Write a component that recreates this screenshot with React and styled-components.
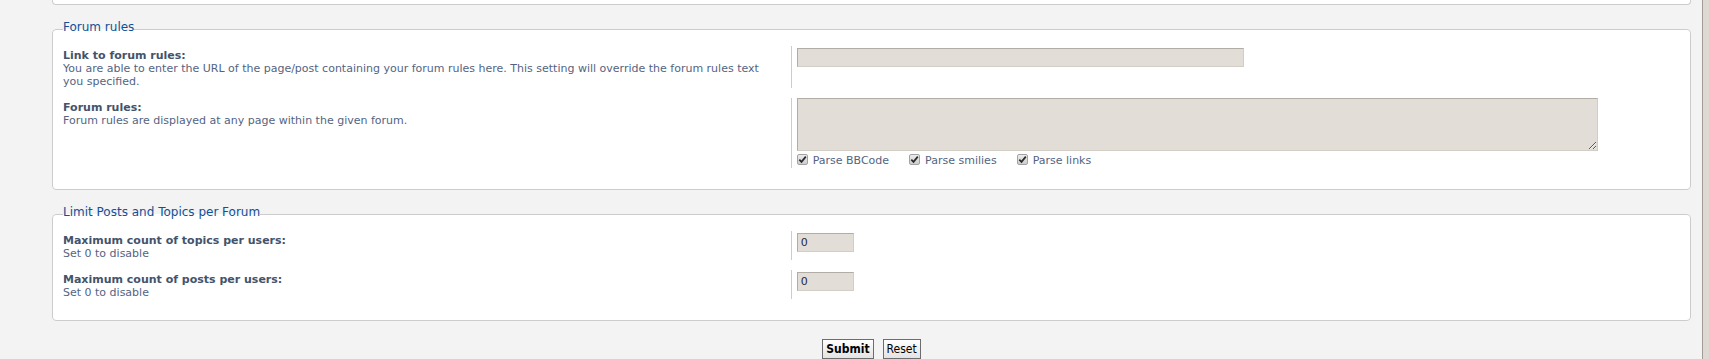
import React from 'react';
import styled, { createGlobalStyle, css } from 'styled-components';

const GlobalStyle = createGlobalStyle`
  html, body {
    margin: 0;
    padding: 0;
    background: #f3f3f3;
  }
  body {
    font-family: "DejaVu Sans", Verdana, sans-serif;
    font-size: 11px;
    color: #536482;
  }
`;

const Page = styled.div`
  display: flex;
  height: 100vh;
  overflow: hidden;
`;

const Main = styled.main`
  flex: 1;
  min-width: 0;
  padding: 0 11px 0 52px;
`;

const ScrollTrack = styled.div`
  width: 6px;
  border-left: 1px solid #a19d96;
  background: #dedad3;
`;

/* bottom of the previous fieldset, scrolled out of view */
const ClippedFieldset = styled.div`
  height: 4px;
  background: #fff;
  border: 1px solid #ccc;
  border-top: none;
  border-radius: 0 0 4px 4px;
  margin-bottom: 14px;
`;

const Fieldset = styled.fieldset`
  margin: 0 0 14px;
  padding: 7px 10px 11px;
  background: #fff;
  border: 1px solid #ccc;
  border-radius: 4px;
  min-width: 0;
`;

const Legend = styled.legend`
  padding: 0 0 4px;
  font-size: 12px;
  line-height: 16px;
  color: #115098;
`;

const Row = styled.dl`
  display: flex;
  margin: 0 0 10px;
`;

const Term = styled.dt`
  box-sizing: border-box;
  flex: none;
  width: 45%;
  margin: 0;
  padding: 3px 10px 0 0;
  line-height: 13px;
`;

const Label = styled.label`
  display: block;
  font-weight: bold;
  color: #44536b;
`;

const Explain = styled.span`
  display: block;
  color: #536482;
`;

const Detail = styled.dd`
  flex: 1;
  margin: 0;
  padding: 0 0 0 5px;
  border-left: 1px solid #ccc;
`;

const fieldBase = css`
  box-sizing: border-box;
  display: block;
  margin: 0;
  padding: 1px 3px;
  background: #e2ded7;
  border: 1px solid;
  border-color: #b1ada5 #d2cec6 #d2cec6 #b1ada5;
  font-family: inherit;
  font-size: 11px;
  color: #1d2a44;
  outline: none;
`;

const TextInput = styled.input`
  ${fieldBase};
  width: ${(p) => p.$width}px;
  height: 19px;
  margin: 2px 0 0;
`;

const TextArea = styled.textarea`
  ${fieldBase};
  width: 801px;
  height: 53px;
  resize: both;
`;

const Options = styled.div`
  display: flex;
  align-items: flex-end;
  gap: 20px;
  height: 17px;
`;

const Option = styled.label`
  display: inline-flex;
  align-items: flex-end;
  gap: 5px;
  line-height: 15px;
  color: #536482;
`;

const Box = styled.span`
  box-sizing: border-box;
  width: 11px;
  height: 11px;
  margin-bottom: 3px;
  border: 1px solid #a2a2a2;
  border-radius: 2px;
  background: linear-gradient(#ececec, #cdcdcd);
  display: flex;
  align-items: center;
  justify-content: center;
`;

/* margin collapses with the fieldset's 14px bottom margin */
const Buttons = styled.p`
  margin: 18px 0 0;
  display: flex;
  justify-content: center;
  gap: 9px;
`;

const Button = styled.button`
  height: 20px;
  padding: 0 3px;
  font-family: "DejaVu Sans Condensed", "DejaVu Sans", sans-serif;
  font-stretch: condensed;
  font-size: 12px;
  font-weight: ${(p) => (p.$primary ? 'bold' : 'normal')};
  color: #000;
  border: 1px solid #6d6d6d;
  background: linear-gradient(#ffffff, #e3e3e3);
  cursor: pointer;
`;

const Check = ({ label }) => (
  <Option>
    <Box>
      <svg width="9" height="9" viewBox="0 0 9 9">
        <path d="M1.3 4.6 L3.5 6.9 L7.8 1.6" fill="none" stroke="#2b2b2b" strokeWidth="1.7" />
      </svg>
    </Box>
    {label}
  </Option>
);

const Setting = ({ title, explain, children }) => (
  <Row>
    <Term>
      <Label>{title}</Label>
      <Explain>{explain}</Explain>
    </Term>
    <Detail>{children}</Detail>
  </Row>
);

export default function App() {
  return (
    <>
      <GlobalStyle />
      <Page>
        <Main>
          <ClippedFieldset />

          <Fieldset>
            <Legend>Forum rules</Legend>
            <Setting
              title="Link to forum rules:"
              explain="You are able to enter the URL of the page/post containing your forum rules here. This setting will override the forum rules text you specified."
            >
              <TextInput type="text" $width={447} defaultValue="" />
            </Setting>
            <Setting
              title="Forum rules:"
              explain="Forum rules are displayed at any page within the given forum."
            >
              <TextArea defaultValue="" />
              <Options>
                <Check label="Parse BBCode" />
                <Check label="Parse smilies" />
                <Check label="Parse links" />
              </Options>
            </Setting>
          </Fieldset>

          <Fieldset>
            <Legend>Limit Posts and Topics per Forum</Legend>
            <Setting title="Maximum count of topics per users:" explain="Set 0 to disable">
              <TextInput type="text" $width={57} defaultValue="0" />
            </Setting>
            <Setting title="Maximum count of posts per users:" explain="Set 0 to disable">
              <TextInput type="text" $width={57} defaultValue="0" />
            </Setting>
          </Fieldset>

          <Buttons>
            <Button $primary>Submit</Button>
            <Button>Reset</Button>
          </Buttons>
        </Main>
        <ScrollTrack />
      </Page>
    </>
  );
}
